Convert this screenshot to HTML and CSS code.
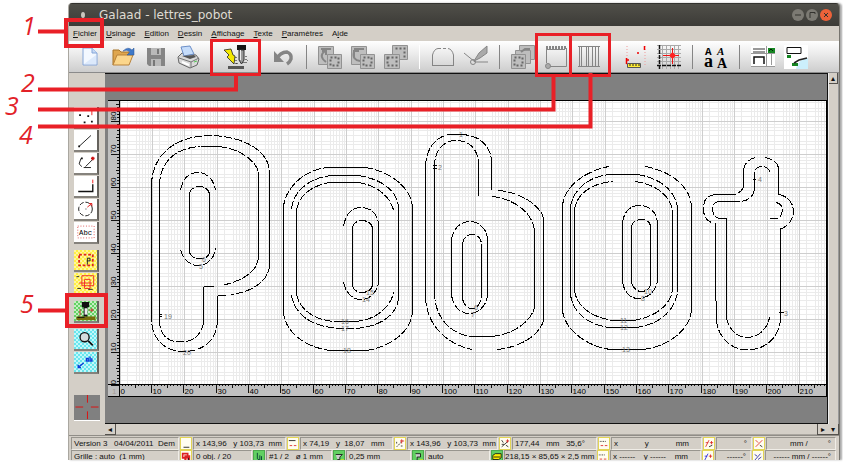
FILE: index.html
```html
<!DOCTYPE html>
<html lang="fr">
<head>
<meta charset="utf-8">
<title>Galaad - lettres_pobot</title>
<link rel="stylesheet" href="styles.css">
</head>
<body>
<main class="window">
  <header class="titlebar">
    <span class="title-dot"></span>
    <h1>Galaad - lettres_pobot</h1>
    <div class="window-controls">
      <button aria-label="Réduire"><svg viewBox="0 0 12 12"><path d="M3 6H9"/></svg></button>
      <button aria-label="Agrandir"><svg viewBox="0 0 12 12"><path d="M4 9V3.500H9V5"/></svg></button>
      <button class="close" aria-label="Fermer"><svg viewBox="0 0 12 12"><path d="M4 4L8 8M8 4L4 8"/></svg></button>
    </div>
  </header>

  <nav class="menubar">
    <button><u>F</u>ichier</button>
    <button><u>U</u>sinage</button>
    <button><u>E</u>dition</button>
    <button><u>D</u>essin</button>
    <button><u>A</u>ffichage</button>
    <button><u>T</u>exte</button>
    <button><u>P</u>aramètres</button>
    <button>A<u>i</u>de</button>
  </nav>

  <div class="toolbar">
    <button aria-label="Nouveau"><svg viewBox="0 0 24 24"><path d="M5 3H14L19 8V20H5Z" fill="#f3f8ff" stroke="#86a6d8"/><path d="M14 3V8H19" fill="#c6d9f5" stroke="#86a6d8"/><path d="M6 19L18 10V19Z" fill="#dce9fb"/></svg></button>
    <button aria-label="Ouvrir"><svg viewBox="0 0 24 24"><path d="M2 20V5H8L10 7H18V11" fill="#dfa64e" stroke="#a87428"/><path d="M2 20L6 10H22L18 20Z" fill="#fbd68c" stroke="#b9823a"/><path d="M12 6Q17 1 21 5L23 3V10H16L19 7Q16 4 12 6Z" fill="#3f79c8" stroke="#2a5596" stroke-width=".5"/></svg></button>
    <button aria-label="Enregistrer"><svg viewBox="0 0 24 24"><path d="M3 3H21V21H5L3 19Z" fill="#858585"/><path d="M7 3H17V10H7ZM7 14H17V21H7Z" fill="#b9b9b9"/><path d="M13 4H15V9H13ZM9 15H11V21H9Z" fill="#777"/></svg></button>
    <button aria-label="Imprimer"><svg viewBox="0 0 24 24"><path d="M1 12L5 8L19 10L22 14L20 20L13 23L2 18Z" fill="#d9d9d9" stroke="#666"/><path d="M4 2L13 1L17 9L7 11Z" fill="#c5dcfa" stroke="#6c8fc8"/><path d="M2 13L14 17L22 13M14 17V22" fill="none" stroke="#777"/><path d="M5 11L17 10L19 12L13 14Z" fill="#555"/><path d="M5 17L12 20" stroke="#fff" stroke-width="2"/><path d="M17 17L20 16" stroke="#5c5" /></svg></button>
    <i class="space"></i>
    <button aria-label="Usiner"><svg viewBox="0 0 24 24"><path d="M0 5L7 4L9 10L11 11L10 19L3 12L5 10Z" fill="#f4e900" stroke="#222" stroke-width=".8"/><path d="M13 0H22V5H13Z" fill="#151515"/><path d="M15 5H20V15L17.500 19L15 15Z" fill="#999" stroke="#333"/><path d="M16.500 5V15" stroke="#eee"/><path d="M4 21H20V24H4Z" fill="#555"/><path d="M12 12V19M22 11V18M20 17V20M13 18V20M24 15V16" stroke="#111" stroke-dasharray="1 2"/></svg></button>
    <i class="space"></i>
    <button aria-label="Annuler"><svg viewBox="0 0 24 24"><path d="M5 15Q9 7 16 7Q21 9 20 14Q19 17 16 19" fill="none" stroke="#858585" stroke-width="3.500"/><path d="M3 6V17H13Z" fill="#858585"/></svg></button>
    <i class="space line"></i>
    <button aria-label="Pivoter"><svg viewBox="0 0 24 24" class="gray"><path d="M.5 1.500H15.500V19.500H.5Z" class="sheet"/><path d="M3 4H13" stroke-width="2"/><path d="M8 17Q0 11 7 6M4 6H8V10" stroke-width="2"/><path d="M9.500 9.500H23.500V23.500H9.500Z" class="sheet"/><path d="M12.500 12.500H20.500V20.500H12.500Z" class="dots"/></svg></button>
    <button aria-label="Retourner"><svg viewBox="0 0 24 24" class="gray"><path d="M.5 1.500H15.500V19.500H.5Z" class="sheet"/><path d="M3 4H13" stroke-width="2"/><path d="M3 7Q1 15 9 16M3 11V6H8" stroke-width="2"/><path d="M9.500 9.500H23.500V23.500H9.500Z" class="sheet"/><path d="M12.500 12.500H20.500V20.500H12.500Z" class="dots"/></svg></button>
    <button aria-label="Dupliquer"><svg viewBox="0 0 24 24" class="gray"><path d="M8.500 .5H23.500V14.500H8.500Z" class="sheet"/><path d="M11.500 3.500H20.500V12.500" class="dots"/><path d="M.5 9.500H15.500V23.500H.5Z" class="sheet"/><path d="M3.500 12.500H12.500V20.500H3.500Z" class="dots"/></svg></button>
    <i class="space light"></i>
    <button aria-label="Arrondir"><svg viewBox="0 0 24 24" class="gray"><path d="M1.500 21V10Q3 4 7 3.500M17 3.500Q21 4 22.500 10V21M2 20.500H22"/><path d="M7 3.500H17" stroke-dasharray="3 2"/></svg></button>
    <button aria-label="Couper"><svg viewBox="0 0 24 24" class="gray"><path d="M0 8L11 17H24"/><circle cx="9" cy="17" r="2.500"/><path d="M10 16L15 8L23 1V8L16 13Z" fill="#aaa"/></svg></button>
    <i class="space line"></i>
    <button aria-label="Empiler"><svg viewBox="0 0 24 24" class="gray"><path d="M8.500 .5H23.500V14.500H8.500Z" class="sheet"/><path d="M4.500 5.500H19.500V18.500H4.500Z" class="sheet"/><path d="M10 7L14 4H19" stroke-width="2"/><path d="M.5 9.500H14.500V23.500H.5Z" class="sheet"/><path d="M3.500 12.500H11.500V20.500H3.500Z" class="dots"/></svg></button>
    <button aria-label="Contour"><svg viewBox="0 0 24 24" class="gray"><path d="M3 4.500H21M2.500 3V18M22.500 3V21.500H6"/><path d="M2 2.500H23" stroke-width="3" stroke-dasharray="2 1"/><circle cx="4" cy="21" r="2.500" fill="#aaa"/></svg></button>
    <button aria-label="Hachures"><svg viewBox="0 0 24 24" class="gray"><path d="M1 1.500H23M1 21.500H23M2.500 2V21M4.500 2V21M9.500 2V21M11.500 2V21M15.500 2V21M18.500 2V21M21.500 2V21"/></svg></button>
    <i class="space"></i>
    <button aria-label="Dimensions"><svg viewBox="0 0 24 24"><path d="M3 1V20M21 1V20" stroke="#ef9a9a" stroke-dasharray="1 2"/><path d="M20.500 1V5M2.500 13V19M3 15H5M13 8H15" stroke="#e00" stroke-width="1.500"/><path d="M3.500 18.500H16.500V22.500H3.500Z" fill="#ffed35" stroke="#555"/><path d="M6 19V21M9 19V21M12 19V21M15 19V21" stroke="#222"/></svg></button>
    <button aria-label="Origine"><svg viewBox="0 0 24 24"><path d="M0 .5H24M0 4.500H24M0 8.500H24M0 12.500H24M0 16.500H24M5.500 0V24M9.500 0V24M13.500 0V24M17.500 0V24M21.500 0V24" stroke="#aaa"/><path d="M2.500 0V24M0 20.500H24" stroke="#111" stroke-width="1.500" stroke-dasharray="4 1"/><path d="M6 10.500H22M15.500 3V19" stroke="#e11"/><path d="M12 10.500L15.500 7L19 10.500L15.500 14Z" fill="#f22"/></svg></button>
    <i class="space line"></i>
    <button aria-label="Polices"><svg viewBox="0 0 24 24"><text x="1" y="10" class="glyph mono">A</text><text x="13" y="10" class="glyph script">A</text><text x="0" y="22" class="glyph heavy">a</text><text x="13" y="23" class="glyph serif">A</text></svg></button>
    <i class="space line"></i>
    <button aria-label="Panneaux"><svg viewBox="0 0 24 24"><path d="M0 1H24V21H0Z" fill="#fff"/><path d="M15.500 1V21M0 8.500H24M0 21.500H24M20.500 9V20" stroke="#999"/><path d="M2 4H14M2 7H14" stroke="#333"/><path d="M17 3H24V8H17Z" fill="#158522"/><path d="M18 6L20 4L22 6" stroke="#020" fill="none"/><path d="M3 19V12H13V19" fill="none" stroke="#111" stroke-width="1.500"/></svg></button>
    <button aria-label="Aperçu"><svg viewBox="0 0 24 24"><path d="M0 0H24V24H0Z" fill="#fff"/><path d="M12 24Q14 14 24 13V24Z" fill="#cceffc"/><path d="M3 2.500H17V8.500H3Z" fill="none" stroke="#111"/><path d="M3 10H7V13H3ZM8 18H14V21H8Z" fill="#158522"/><path d="M10 18L15 15L23 13" fill="none" stroke="#222" stroke-width="1.500"/></svg></button>
  </div>

  <div class="workspace">
    <aside class="tools">
      <div class="tool-group">
        <button aria-label="Points"><svg viewBox="0 0 24 22"><path d="M5 9H7M14 10H16M10 17H12M18 16H20" stroke="#111" stroke-width="2"/><path d="M19 3V9" stroke="#e11"/></svg></button>
        <button aria-label="Ligne"><svg viewBox="0 0 24 22"><path d="M5 18L18 6" stroke="#111"/><path d="M4 18H6" stroke="#111" stroke-width="2"/></svg></button>
        <button aria-label="Courbe"><svg viewBox="0 0 24 22"><path d="M7 6L5 12L8 15M12 15L20 7M10 16H18" fill="none" stroke="#111"/><path d="M7 6H9" stroke="#111" stroke-width="2"/><path d="M18 6H22M20 4V8" stroke="#c11" stroke-width="2"/></svg></button>
        <button aria-label="Rectangle"><svg viewBox="0 0 24 22"><path d="M4 17H20V9" fill="none" stroke="#111" stroke-width="1.500"/><path d="M20 4V8" stroke="#e11"/></svg></button>
        <button aria-label="Cercle"><svg viewBox="0 0 24 22"><circle cx="12" cy="11" r="7.500" fill="none" stroke="#111" stroke-dasharray="5 2"/><path d="M12 11H13" stroke="#111"/><path d="M14 9L19 5M16 5H19V8" stroke="#d11" fill="none"/></svg></button>
        <button aria-label="Texte"><svg viewBox="0 0 24 22"><path d="M3.500 4.500H21.500V17.500H3.500Z" fill="none" stroke="#d44" stroke-dasharray="1 2"/><text x="5" y="14" class="abc">Abc</text></svg></button>
      </div>
      <div class="tool-group yellow">
        <button aria-label="Propriétés"><svg viewBox="0 0 24 22"><path d="M5 5H20V17H5Z" fill="none" stroke="#d22" stroke-width="2" stroke-dasharray="3 2"/><path d="M14 16V9H17V12H14" fill="none" stroke="#111"/></svg></button>
        <button aria-label="Regrouper"><svg viewBox="0 0 24 22"><path d="M8 3H21V14H8ZM11 7H17V17H11ZM5 11H19" fill="none" stroke="#e22"/><path d="M2 4H5M3 17H7M15 18H20" stroke="#222"/></svg></button>
      </div>
      <div class="tool-group green">
        <button aria-label="Parcours d'outil"><svg viewBox="0 0 24 22"><path d="M2 17H23V21H2Z" fill="#776f0c"/><path d="M8 1H16V7H14V17H10V7H8Z" fill="#111"/><path d="M11 8H14V15H11Z" fill="#eee"/><path d="M6 9V16M16 10H21M19 8V12" stroke="#c22"/><path d="M3 18H11" stroke="#111"/></svg></button>
      </div>
      <div class="tool-group cyan">
        <button aria-label="Loupe"><svg viewBox="0 0 24 22"><circle cx="11" cy="9" r="5" fill="#d4dddd" stroke="#111" stroke-width="1.500"/><path d="M15 13L20 18" stroke="#111" stroke-width="2"/></svg></button>
        <button aria-label="Mesure"><svg viewBox="0 0 24 22"><path d="M5 16L10 12M4 14V17H7M13 7H15V10H13ZM17 5V10H19V7" fill="none" stroke="#0738d8" stroke-width="1.500"/></svg></button>
      </div>
      <svg class="locator" viewBox="0 0 26 26"><path d="M1 12.500H9M17 12.500H25M13.500 0V8M13.500 17V25" stroke="#d11"/></svg>
    </aside>

    <section class="canvas">
      <svg class="drawing" viewBox="108 100 719 297">
        <rect x="108" y="100" width="719" height="297" class="ruler-bg"/>
        <rect x="120" y="101" width="706" height="284" fill="#fff"/>
        <g id="grid"></g>
        <g id="rulers"></g>
        <path class="edge" d="M108 100.500H826.500M108 396.500H826.500M119.500 101V397M108 384.500H826M826.500 100V397"/>
        <text x="112" y="394" class="corner">1</text>

        <path class="side" d="M151.500 185V320M269.500 172V265M217.500 295.500V320M217.500 295.500H226M159.500 185V322M258.500 172V257M203.500 286.500V322M203.500 286.500H214M201 146.500H219M189.500 194V252M209.500 194V252"/>
        <path class="curve" d="M151.500 185C152 155 175 136 210 135.500C242 136 269 150 269.500 172M269.500 265C269 281 252 292 231 294.500M217.500 320C217 340 204 351.500 183 351.500C165 351.500 152 339 151.500 320M159.500 185C160 163 174 148 200 146.500M219 146.500C240 149 255 160 258.500 172M258.500 257C257 272 244 280 222 285.500M203.500 322C202 335 193 342 180 342C168 342 160 335 159.500 322M180.500 190C183 177 190 172.500 198 172.500C208 172.500 214 181 215.500 190M180.500 250C184 260 190 265.500 198 265.500C208 265.500 215 257 215.500 248M189.500 194C190 189 195 186.500 199.500 186.500C204 186.500 209 189 209.500 194M189.500 252C190 256 195 259 200 259C205 259 209 256 209.500 252"/>

        <path class="side" d="M283.500 208V311M412.500 208V311M398.500 207V298M296.500 210V294M329 167.500H365M333 175.500H358M330 182.500H358M330 350.500H366M336 321.500H355M352.500 228V285M372.500 228V285M378.500 223V283"/>
        <path class="curve" d="M283.500 208C284 190 303 169 329 167.500M365 167.500C390 171 412 188 412.500 208M283.500 311C284 331 304 347 330 350.500M366 350.500C391 347 412 331 412.500 311M291.500 209C293 192 309 177 333 175.500M358 175.500C381 179 397 190 398.500 207M291.500 295C294 313 310 327 340 328.500H355C380 327 397 315 398.500 298M296.500 210C299 196 310 186 330 182.500M358 182.500C377 185 391 197 394 212M296.500 294C299 309 315 321 336 321.500M355 321.500C377 320 390 307 394 292M343.500 226C346 214 351 207.500 361 207.500C371 207.500 377 214 378.500 223M343.500 282C346 294 353 299.500 361 299.500C371 299.500 377 291 378.500 283M352.500 228C353 223 358 220.500 362 220.500C368 220.500 372 224 372.500 228M352.500 285C353 290 358 292.500 362 292.500C368 292.500 372 289 372.500 285"/>

        <path class="side" d="M425.500 166V298M491.500 160V190M543.500 218V320M434.500 167V293M478.500 163V196M534.500 230V307M451.500 240V295M487.500 239V295M462.500 244V299M481.500 244V297M470 336.500H492M452 134.500H461"/>
        <path class="curve" d="M425.500 166C426 147 438 134.500 452 134.500M461 134.500C480 135 490 146 491.500 160M498 190.500C520 192 540 205 543.500 218M425.500 298C427 326 447 344 472 349.500M497 349.500C523 347 541 333 543.500 320M434.500 167C434 150 444 140.500 456 140.500C470 140.500 478 150 478.500 163M492 196.500C514 199 532 212 534.500 230M434.500 293C435 318 450 333 470 336.500M492 336.500C515 334 532 320 534.500 307M451.500 240C453 227 462 221.500 470 221.500C479 221.500 487 229 487.500 239M451.500 295C453 306 460 313.500 469 313.500C480 313.500 487 304 487.500 295M462.500 244C463 238 467 234.500 472 234.500C477 234.500 481 238 481.500 244M462.500 299C464 305 467 308.500 472 308.500C478 308.500 481 302 481.500 297"/>

        <path class="side" d="M562.500 207V310M691.500 207V310M570.500 207V295M677.500 208V292M574.500 210V290M672.500 210V290M611 174.500H637M611 349.500H643M614 320.500H633M610 327.500H635M622.500 223V282M657.500 223V279M631.500 228V283M650.500 226V285"/>
        <path class="curve" d="M562.500 207C563 187 585 171 609 166.500M645 166.500C671 171 691 187 691.500 207M562.500 310C564 330 588 347 611 349.500M643 349.500C670 346 690 329 691.500 310M570.500 207C573 190 588 176 611 174.500M637 174.500C660 178 675 190 677.500 208M570.500 295C573 312 587 325 610 327.500M635 327.500C660 325 675 310 677.500 292M574.500 210C576 194 592 183 613 181.500M635 181.500C656 184 670 196 672.500 210M574.500 290C576 306 592 318 614 320.500M633 320.500C655 317 670 306 672.500 290M622.500 223C624 211 630 205.500 640 205.500C650 205.500 657 213 657.500 223M622.500 282C624 292 630 298.500 638 298.500C649 298.500 657 290 657.500 279M631.500 228C632 222 636 219.500 641 219.500C646 219.500 650 222 650.500 226M631.500 283C633 288 637 291.500 641 291.500C646 291.500 650 289 650.500 285"/>

        <path class="side" d="M743.500 170V187M778.500 168V194M716 194.500H734M715.500 223V301M716.500 301V320M780.500 229V320M754.500 174V190M720 201.500H740M720 218.500H726.500V317M770 218.500H776"/>
        <path class="curve" d="M743.500 170C744 163 750 158 757 157.500M765 157.500C773 159 778 163 778.500 168M743.500 187C742 191 738 194 734 194.500M716 194.500C707 195 704 200 703.500 206C703 216 706 221 712 222.500M778.500 194C789 197 793 203 793.500 211C793 219 789 226 780.500 229M716.500 320C718 337 730 348 743 349.500H753C768 347 779 336 780.500 320M769.500 172C769 168 765 166.500 762 166.500C757 166.500 754 170 754.500 174M754.500 190C753 197 748 201 740 201.500M720 201.500C714 202 712 206 712.500 209C713 216 716 218 720 218.500M726.500 317C728 329 737 337.500 747 337.500C759 337.500 768 328 769.500 317M776 202.500C782 204 782 207 782.500 210C782 216 779 218 776 218.500"/>

        <g class="marks">
          <text x="202" y="262">6</text><text x="199" y="269">5</text><text x="164" y="319">19</text><text x="183" y="355">20</text>
          <text x="366" y="295">15</text><text x="362" y="302">14</text><text x="341" y="324">16</text><text x="341" y="331">17</text><text x="343" y="353">18</text>
          <text x="459" y="137">1</text><text x="438" y="170">2</text><text x="474" y="310">6</text><text x="471" y="317">7</text>
          <text x="644" y="294">10</text><text x="641" y="301">8</text><text x="620" y="323">11</text><text x="620" y="330">12</text><text x="622" y="352">13</text>
          <text x="758" y="182">4</text><text x="784" y="316">3</text>
        </g>
        <path class="side" d="M160 314.500H162M159 316.500H162M779 312.500H784M753 179.500H756M433 165.500H437M433 168.500H437M464 134.500H458M195 265.500H198"/>
      </svg>
    </section>

    <div class="vscroll"><button aria-label="Haut">▴</button></div>
    <div class="hscroll"><button aria-label="Gauche">◂</button><button aria-label="Droite">▸</button></div>
    <button class="scroll-corner" aria-label="Bas">▾</button>
  </div>

  <footer class="status">
    <div class="status-row top">
      <span>Version 3 &nbsp; 04/04/2011 &nbsp;Dem</span>
      <svg viewBox="0 0 12 12" class="chip pale"><path d="M3 10.500H10" stroke="#111"/></svg>
      <span>x 143,96 &nbsp; y 103,73 &nbsp;mm</span>
      <svg viewBox="0 0 12 12" class="chip"><path d="M1 2.500H9" stroke="#111"/><path d="M2 8.500H5M7 8.500H10" stroke="#d22"/></svg>
      <span>x 74,19 &nbsp; y &nbsp;18,07 &nbsp; mm</span>
      <svg viewBox="0 0 12 12" class="chip"><path d="M2 10L9 3M2 4V7M7 9H10" stroke="#222" stroke-dasharray="2 1"/><path d="M6 3H11M8 1V6" stroke="#d22"/></svg>
      <span>x 143,96 &nbsp; y 103,73 &nbsp;mm</span>
      <svg viewBox="0 0 12 12" class="chip"><path d="M2 10L10 3M2 2L4 5M7 8L10 10M2 7H5" stroke="#222"/><path d="M7 3H11M9 1V5" stroke="#d22"/></svg>
      <span>177,44 &nbsp; mm &nbsp; 35,6°</span>
      <svg viewBox="0 0 12 12" class="chip"><path d="M1 3.500H9" stroke="#111" stroke-dasharray="1 1"/><path d="M2 8.500H5M7 8.500H10" stroke="#d22"/></svg>
      <span class="spread"><b>x</b><b>y</b><b>mm</b></span>
      <svg viewBox="0 0 12 12" class="chip"><path d="M2 10L6 2M2 5H5" stroke="#d22"/><path d="M7 5H11M9 3V7" stroke="#d22"/><path d="M6 10L10 8" stroke="#222"/></svg>
      <span class="end">°</span>
      <svg viewBox="0 0 12 12" class="chip"><path d="M2 10L10 2M2 2L5 5" stroke="#d22"/><path d="M7 8L10 10" stroke="#222"/></svg>
      <span class="end">mm / &nbsp; &nbsp; &nbsp; &nbsp; °</span>
    </div>
    <div class="status-row bottom">
      <span>Grille : auto &nbsp;(1 mm)</span>
      <svg viewBox="0 0 12 12" class="chip"><path d="M2 2H8V7H2ZM5 5H10V10H5Z" fill="none" stroke="#d22" stroke-width="2"/><path d="M9 7V11" stroke="#111"/></svg>
      <span>0 obj. / 20</span>
      <svg viewBox="0 0 12 12" class="chip go"><path d="M4 1V8L7 10V4M9 5V10" fill="none" stroke="#033"/></svg>
      <span>#1 / 2 &nbsp; ø 1 mm</span>
      <svg viewBox="0 0 12 12" class="chip go"><path d="M2 3H10L7 6V9H4" fill="#ccc" stroke="#111"/><path d="M8 9H12V12H8Z" fill="#fe0"/></svg>
      <span>0,25 mm</span>
      <svg viewBox="0 0 12 12" class="chip go"><path d="M3 2H9V6H5V10" fill="#ccc" stroke="#111"/><path d="M8 9H12V12H8Z" fill="#fe0"/></svg>
      <span>auto</span>
      <svg viewBox="0 0 12 12" class="chip go"><path d="M1 4L4 2H11V7L8 9H1Z" fill="#fe0" stroke="#111"/><path d="M2 6H10" stroke="#111"/></svg>
      <span>218,15 × 85,65 × 2,5 mm</span>
      <svg viewBox="0 0 12 12" class="chip"><path d="M1 3.500H9" stroke="#111" stroke-dasharray="1 1"/><path d="M2 8.500H5M7 8.500H10" stroke="#d22"/></svg>
      <span class="spread"><b>x ------</b><b>y ------</b><b>mm</b></span>
      <svg viewBox="0 0 12 12" class="chip"><path d="M2 10L6 2M2 5H5" stroke="#22d"/><path d="M7 5H11M9 3V7" stroke="#d22"/></svg>
      <span class="end">------°</span>
      <svg viewBox="0 0 12 12" class="chip"><path d="M2 10L9 2M2 3L5 5M6 9L10 6" stroke="#22a"/></svg>
      <span class="end">------ mm / ------°</span>
    </div>
  </footer>
</main>

<svg class="callouts" viewBox="0 0 843 466">
  <g class="thick">
    <rect x="66" y="20" width="36" height="26"/>
    <rect x="67" y="295" width="39" height="31"/>
    <path d="M38 31.500H66M38 310.500H67"/>
    <path d="M38 89.500H238M236 90V75M38 109.500H555.500M553.500 109V76M38 126.500H592.500M590.500 127V73"/>
  </g>
  <g class="thin">
    <rect x="211.500" y="40.500" width="48" height="34"/>
    <rect x="536.500" y="34.500" width="34" height="41"/>
    <rect x="570.500" y="34.500" width="39" height="41"/>
  </g>
  <text x="22" y="35">1</text>
  <text x="21" y="92">2</text>
  <text x="5" y="115">3</text>
  <text x="19" y="144">4</text>
  <text x="20" y="313">5</text>
</svg>
<script src="grid.js"></script>
</body>
</html>
```
FILE: styles.css
```css
* { box-sizing: border-box; }
body {
  margin: 0;
  min-height: 100vh;
  padding: 3px 3px 6px 68px;
  background: #fff;
  font-family: "Liberation Sans", Arial, sans-serif;
  color: #111;
  display: flex;
}
button {
  border: 0;
  padding: 0;
  margin: 0;
  background: none;
  font: inherit;
  color: inherit;
}
.window {
  flex: 1;
  min-width: 0;
  display: flex;
  flex-direction: column;
  background: #d4cfc7;
  border-left: 1px solid #aaa7a0;
  border-right: 1px solid #77756f;
  border-top-left-radius: 4px;
  border-top-right-radius: 4px;
  box-shadow: 2px 0 2px #aaa;
  overflow: hidden;
}

/* Title bar */
.titlebar {
  height: 23px;
  flex: none;
  display: flex;
  align-items: center;
  padding: 0 7px 0 12px;
  background: linear-gradient(#504f49, #3c3b37);
  border-top: 1px solid #33322e;
}
.title-dot { width: 4px; height: 6px; border-radius: 50%; background: #c9c6be; }
h1 {
  margin: 0 0 0 14px;
  font: 500 12px "DejaVu Sans", sans-serif;
  color: #dfdbd2;
}
.window-controls { margin-left: auto; display: flex; gap: 2px; }
.window-controls button {
  width: 12px;
  height: 12px;
  border-radius: 50%;
  background: #7c7a73;
}
.window-controls .close { background: #ee6239; }
.window-controls svg { display: block; fill: none; stroke: #33322e; }

/* Menu */
.menubar {
  height: 15px;
  flex: none;
  display: flex;
  align-items: center;
  gap: 9px;
  padding-left: 4px;
  font-size: 8px;
  line-height: 15px;
}

/* Toolbar */
.toolbar {
  height: 32px;
  flex: none;
  display: flex;
  align-items: center;
  padding-left: 4px;
  background: linear-gradient(#fff, #ececec 40%, #cdcdcd);
  border-bottom: 1px solid #8b8b8b;
}
.toolbar button { width: 33px; height: 28px; flex: none; display: grid; place-items: center; }
.toolbar svg { width: 24px; height: 24px; }
.space { width: 14px; height: 24px; flex: none; display: flex; justify-content: center; }
.space.line::before, .space.light::before { content: ""; width: 1px; background: #858585; }
.space.light::before { background: #fff; }
.gray { fill: none; stroke: #858585; }
.gray .sheet { fill: #bebebe; stroke: #929292; }
.gray .dots { stroke: #666; stroke-width: 2; stroke-dasharray: 2 2; }
.glyph { font-size: 11px; font-weight: bold; }
.mono { font-family: "Liberation Mono", monospace; }
.script { font-family: "Liberation Serif", serif; font-style: italic; }
.heavy { font-family: "Liberation Serif", serif; font-size: 18px; }
.serif { font-family: "Liberation Serif", serif; font-size: 14px; }

/* Workspace */
.workspace {
  flex: 1;
  display: grid;
  grid-template-columns: 36px 1fr 11px;
  grid-template-rows: 1fr 11px;
}
.tools {
  grid-row: 1 / 3;
  padding: 34px 0 0 5px;
  display: flex;
  flex-direction: column;
  gap: 6px;
}
.tool-group { display: flex; flex-direction: column; gap: 1px; }
.tool-group button {
  width: 25px;
  height: 22px;
  background: #fff;
  border-right: 2px solid #65625d;
  border-bottom: 2px solid #85827c;
}
.tool-group svg { display: block; width: 23px; height: 20px; }
.tool-group.yellow button { background: repeating-conic-gradient(#ffef45 0 25%, #fff6a0 0 50%) 0 0 / 4px 4px; }
.tool-group.green button { background: repeating-conic-gradient(#64d264 0 25%, #c4efc0 0 50%) 0 0 / 4px 4px; }
.tool-group.cyan button { background: repeating-conic-gradient(#69e6ee 0 25%, #c1f8fa 0 50%) 0 0 / 4px 4px; }
.abc { font: 8px "Liberation Mono", monospace; }
.locator { width: 26px; height: 26px; margin-top: 15px; background: #808080; border-bottom: 1px solid #fff; }
.canvas {
  min-width: 0;
  background: #808080;
  border: 1px solid #111;
  border-left: 0;
  padding: 26px 0 0 3px;
}
.drawing { display: block; width: 100%; shape-rendering: crispEdges; }
.ruler-bg { fill: #c0c0c0; }
.edge, .side, .curve { fill: none; stroke: #000; }
.curve { stroke-dasharray: 8 2; }
.minor { stroke: #ebebeb; }
.major { stroke: #cecece; }
.tick { stroke: #111; }
.number, .corner { font-size: 8px; }
.corner { fill: #a59d94; }
.marks { font-size: 7px; fill: #777; }
.vscroll { background: #d4cfc7; border-left: 1px solid #eee; border-right: 1px solid #999; }
.vscroll button, .hscroll button, .scroll-corner {
  width: 11px;
  height: 11px;
  display: grid;
  place-items: center;
  font: 8px "DejaVu Sans", sans-serif;
  line-height: 9px;
  border-right: 1px solid #55524d;
  border-bottom: 1px solid #55524d;
}
.vscroll button { width: 9px; }
.hscroll { display: flex; justify-content: space-between; border-bottom: 1px solid #aaa69f; }
.hscroll button:last-child { border-right: 0; border-left: 1px solid #55524d; }

/* Status bar */
.status {
  height: 25px;
  flex: none;
  overflow: hidden;
  padding: 1px 3px 0 2px;
  font-size: 8px;
  line-height: 11px;
  border-top: 1px solid #908d87;
}
.status-row { display: grid; column-gap: 1px; height: 13px; }
.top { grid-template-columns: 108px 12px 93px 12px 93px 12px 91px 12px 85px 12px 91px 12px 36px 12px 1fr; }
.bottom { grid-template-columns: 108px 12px 59px 12px 66px 12px 65px 12px 65px 12px 92px 12px 91px 12px 36px 12px 1fr; }
.status-row span {
  height: 13px;
  padding-left: 2px;
  white-space: nowrap;
  overflow: hidden;
  border: 1px solid #98958e;
  border-right-color: #f0ede7;
  border-bottom-color: #f0ede7;
}
.status-row.bottom span, .bottom .chip { border-bottom: 0; }
.bottom span:nth-of-type(6) { padding-left: 0; border-right: 0; }
.status-row b { font-weight: normal; }
.status-row .spread { display: flex; justify-content: space-between; padding-right: 12px; }
.status-row .end { text-align: right; padding-right: 4px; }
.chip { width: 12px; height: 13px; background: #fffdf0; border: 1px solid #e2d455; }
.chip.go { background: #62d062; border-color: #4ca84c; }

/* Numbered callouts laid over the window */
.callouts {
  position: absolute;
  top: 0;
  left: 0;
  width: 843px;
  height: 466px;
  pointer-events: none;
  font: italic 25px "Open Sans", sans-serif;
  fill: #e22128;
}
.callouts rect, .callouts path { fill: none; stroke: #e92027; }
.thick { stroke-width: 4px; }
.thin { stroke-width: 3px; }
```
FILE: grid.js
```js
const NS = "http://www.w3.org/2000/svg";
const grid = document.getElementById("grid");
const rulers = document.getElementById("rulers");
const X0 = 120, Y0 = 385, STEP_X = 32.35, STEP_Y = 33;

function add(parent, tag, attrs, text) {
  const node = document.createElementNS(NS, tag);
  for (const key in attrs) node.setAttribute(key, attrs[key]);
  if (text !== undefined) node.textContent = text;
  parent.appendChild(node);
}

const near = (v) => Math.floor(v) + 0.5;
let minor = "", major = "", ticks = "";

for (let n = 0; n <= 22; n++) {
  const x = X0 + n * STEP_X;
  for (const d of [-16, -13, -10, -7, -4, -2, 7]) {
    if (x + d > X0 && x + d < 826) minor += `M${near(x + d)} 101V384`;
  }
  if (x < 826) major += `M${near(x)} 101V384`;
}
for (let n = 0; n <= 9; n++) {
  const y = Y0 - n * STEP_Y;
  for (const d of [-13, -10, -5, 3, 6, 9, 14]) {
    if (y + d > 101 && y + d < 384) minor += `M120 ${near(y + d)}H826`;
  }
  if (y > 101 && y < 384) major += `M120 ${near(y)}H826`;
}
for (let n = 0; n <= 218; n++) {
  const x = near(X0 + n * STEP_X / 10);
  const size = n % 10 === 0 ? 8 : n % 5 === 0 ? 3 : 1;
  ticks += `M${x - 1} 385v${size}`;
  if (n % 10 === 0) add(rulers, "text", { x: x, y: 394, class: "number" }, n);
}
for (let n = 0; n <= 85; n++) {
  const y = near(Y0 - n * STEP_Y / 10);
  const size = n % 10 === 0 ? 8 : n % 5 === 0 ? 3 : 2;
  ticks += `M119 ${y}h-${size}`;
  if (n % 10 === 0) add(rulers, "text", { transform: `translate(116 ${y - 1}) rotate(-90)`, class: "number" }, n);
}
add(grid, "path", { d: minor, class: "minor" });
add(grid, "path", { d: major, class: "major" });
add(rulers, "path", { d: ticks, class: "tick" });
```
